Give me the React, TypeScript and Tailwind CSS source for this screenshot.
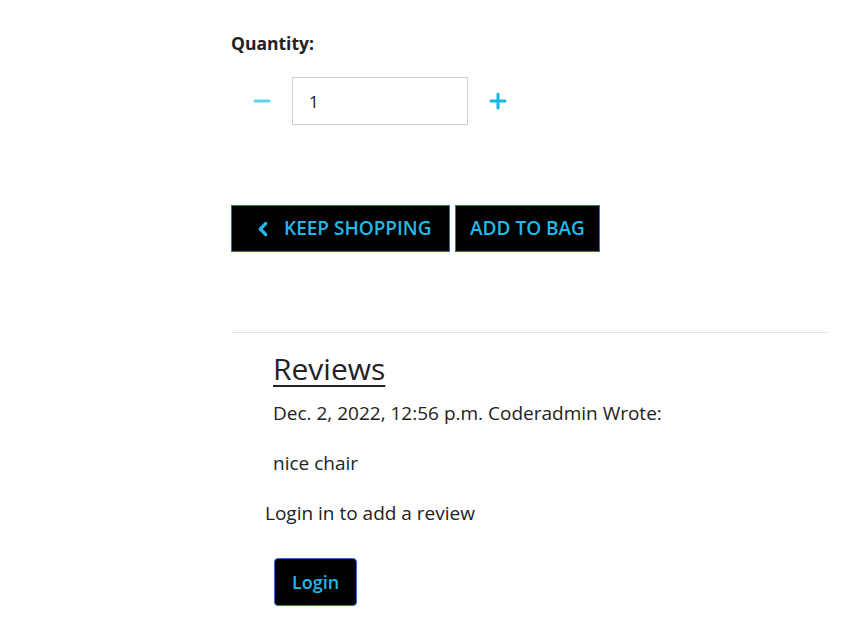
import { ChevronLeft, Minus, Plus } from 'lucide-react'

export default function App() {
  return (
    <div className="min-h-screen bg-white font-['Open_Sans',sans-serif] text-[#222222]">
      <div className="ml-[231px] w-[596px] pt-[31px]">
        <p className="text-[17.5px] font-bold leading-6">Quantity:</p>

        <div className="mt-[22px] flex items-center">
          <button className="flex h-12 w-[61px] items-center justify-center text-[#5fd3f3]">
            <Minus size={24} strokeWidth={3} />
          </button>
          <input
            className="h-12 w-[176px] border border-[#cccccc] px-4 text-[17px] text-[#222222] outline-none"
            defaultValue="1"
          />
          <button className="flex h-12 w-[60px] items-center justify-center text-[#17b5e6]">
            <Plus size={24} strokeWidth={3} />
          </button>
        </div>

        <div className="mt-[80px] flex gap-[5px]">
          <button className="flex h-[47px] w-[219px] items-center gap-[10px] border border-[#2d6fb8] bg-black pl-[20px] text-[19px] font-semibold uppercase text-[#22b8e8]">
            <ChevronLeft size={22} strokeWidth={3.5} />
            Keep Shopping
          </button>
          <button className="flex h-[47px] w-[145px] items-center justify-center border border-[#2d6fb8] bg-black text-[19px] font-semibold uppercase text-[#22b8e8]">
            Add to Bag
          </button>
        </div>

        <hr className="mt-[80px] border-t border-[#e3e3e3]" />

        <div className="pl-[42px] pt-[18px]">
          <h2 className="text-[30px] leading-9 underline decoration-2 underline-offset-[5px]">Reviews</h2>
          <p className="mt-[14px] text-[19px] leading-6">Dec. 2, 2022, 12:56 p.m. Coderadmin Wrote:</p>
          <p className="mt-[26px] text-[19px] leading-6">nice chair</p>
        </div>

        <p className="ml-[34px] mt-[26px] text-[19px] leading-6">Login in to add a review</p>

        <button className="ml-[43px] mt-[33px] h-[48px] w-[83px] rounded-[4px] border border-[#2d6fb8] bg-black text-[18px] font-semibold text-[#22b8e8]">
          Login
        </button>
      </div>
    </div>
  )
}
